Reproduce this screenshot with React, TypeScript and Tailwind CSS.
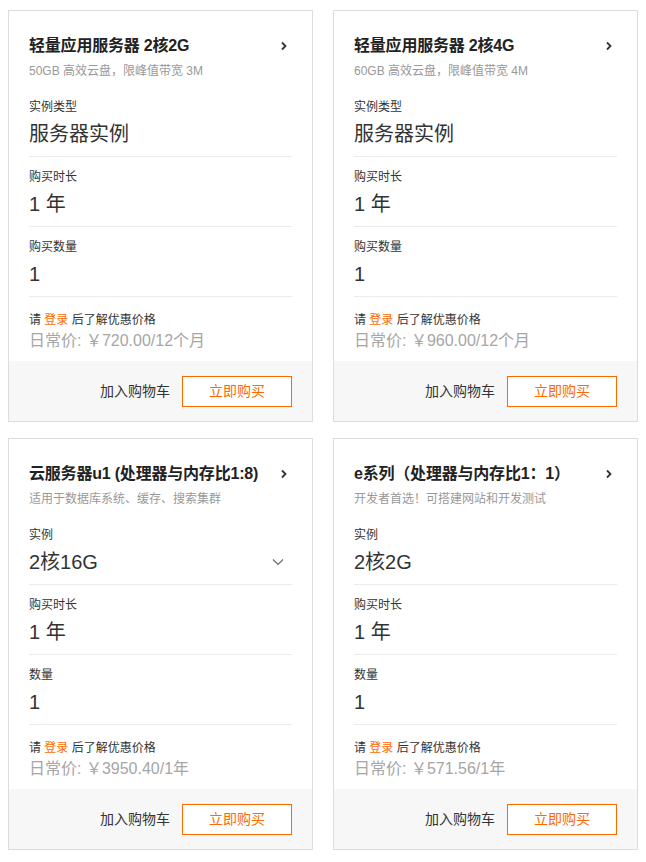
const font = "[font-family:'Liberation_Sans','Noto_Sans_CJK_SC',sans-serif]";

interface Field {
  label: string;
  value: string;
  dropdown?: boolean;
}

interface Product {
  title: string;
  subtitle: string;
  fields: Field[];
  price: string;
}

const products: Product[] = [
  {
    title: "轻量应用服务器 2核2G",
    subtitle: "50GB 高效云盘，限峰值带宽 3M",
    fields: [
      { label: "实例类型", value: "服务器实例" },
      { label: "购买时长", value: "1 年" },
      { label: "购买数量", value: "1" },
    ],
    price: "日常价: ￥720.00/12个月",
  },
  {
    title: "轻量应用服务器 2核4G",
    subtitle: "60GB 高效云盘，限峰值带宽 4M",
    fields: [
      { label: "实例类型", value: "服务器实例" },
      { label: "购买时长", value: "1 年" },
      { label: "购买数量", value: "1" },
    ],
    price: "日常价: ￥960.00/12个月",
  },
  {
    title: "云服务器u1 (处理器与内存比1:8)",
    subtitle: "适用于数据库系统、缓存、搜索集群",
    fields: [
      { label: "实例", value: "2核16G", dropdown: true },
      { label: "购买时长", value: "1 年" },
      { label: "数量", value: "1" },
    ],
    price: "日常价: ￥3950.40/1年",
  },
  {
    title: "e系列（处理器与内存比1：1）",
    subtitle: "开发者首选！可搭建网站和开发测试",
    fields: [
      { label: "实例", value: "2核2G" },
      { label: "购买时长", value: "1 年" },
      { label: "数量", value: "1" },
    ],
    price: "日常价: ￥571.56/1年",
  },
];

function ChevronRight() {
  return (
    <svg width="8" height="10" viewBox="0 0 8 10" className="shrink-0">
      <path d="M2 1.5 L5.5 5 L2 8.5" fill="none" stroke="#333" strokeWidth="1.8" />
    </svg>
  );
}

function ChevronDown() {
  return (
    <svg width="12" height="8" viewBox="0 0 12 8" className="shrink-0">
      <path d="M1 1.5 L6 6.5 L11 1.5" fill="none" stroke="#666" strokeWidth="1.1" />
    </svg>
  );
}

function ProductCard({ product }: { product: Product }) {
  return (
    <div className="flex flex-col border border-[#dcdcdc] bg-white">
      <div className="px-5 pt-[23px] pb-[9px]">
        <div className="flex items-center justify-between h-6">
          <span className="text-base font-bold text-[#222] leading-6 whitespace-nowrap tracking-[-0.2px]">
            {product.title}
          </span>
          <span className="pr-[4px]">
            <ChevronRight />
          </span>
        </div>
        <div className="mt-1 text-xs leading-[18px] text-[#999]">{product.subtitle}</div>
        <div className="mt-[7px]">
          {product.fields.map((f) => (
            <div key={f.label} className="border-b border-[#ebebeb] pt-[11px] pb-[8px]">
              <div className="text-xs leading-[18px] text-[#333]">{f.label}</div>
              <div className="mt-1 flex items-center justify-between">
                <span className="text-[20px] leading-7 text-[#333]">{f.value}</span>
                {f.dropdown && (
                  <span className="pr-[8px]">
                    <ChevronDown />
                  </span>
                )}
              </div>
            </div>
          ))}
        </div>
        <div className="pt-[14px] text-xs leading-[18px] text-[#333]">
          请 <span className="text-[#ff6a00]">登录</span> 后了解优惠价格
        </div>
        <div className="mt-[1px] text-base leading-[22px] text-[#a6a6a6]">{product.price}</div>
      </div>
      <div className="flex h-[60px] items-center justify-end gap-3 bg-[#f7f7f7] px-5">
        <button className="text-sm text-[#333]">加入购物车</button>
        <button className="h-[31px] w-[110px] border border-[#ff6a00] bg-white text-sm text-[#ff6a00]">
          立即购买
        </button>
      </div>
    </div>
  );
}

export default function App() {
  return (
    <div className={`${font} min-h-screen bg-white px-2 pt-[10px]`}>
      <div className="grid w-[630px] grid-cols-[305px_305px] gap-x-5 gap-y-4">
        {products.map((p) => (
          <ProductCard key={p.title} product={p} />
        ))}
      </div>
    </div>
  );
}
